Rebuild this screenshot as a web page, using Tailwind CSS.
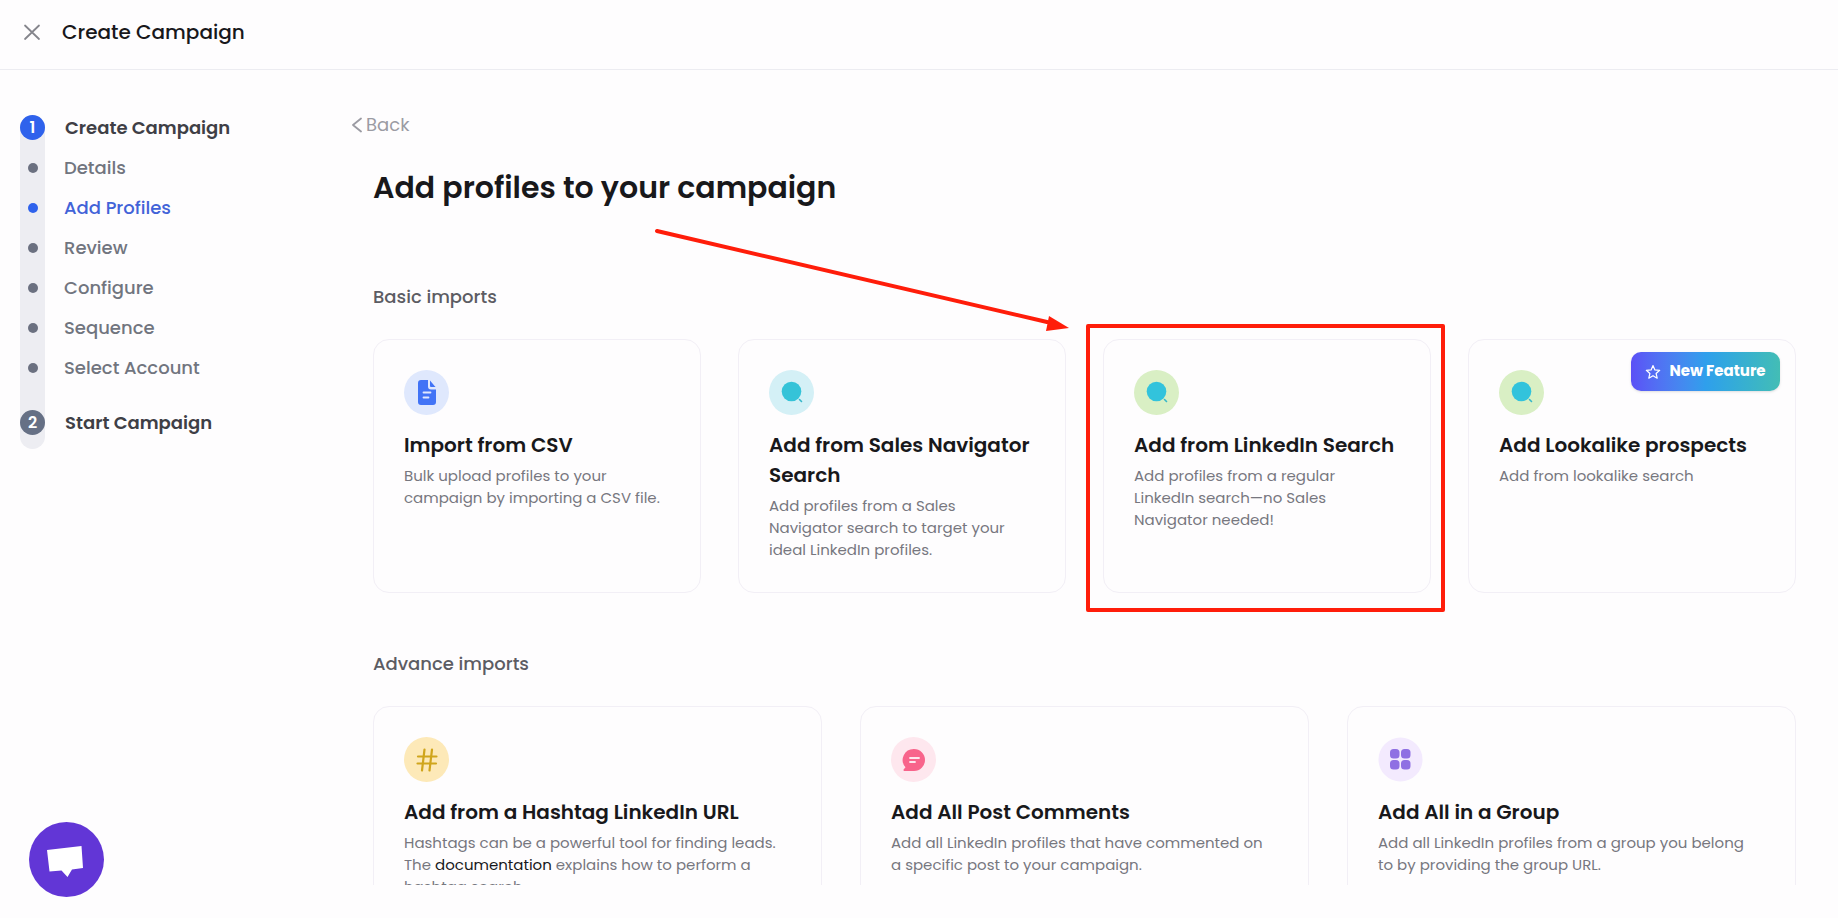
<!DOCTYPE html>
<html lang="en">
<head>
  <meta charset="utf-8">
  <meta name="viewport" content="width=device-width, initial-scale=1">
  <title>Create Campaign</title>
  <script src="https://cdn.jsdelivr.net/npm/@tailwindcss/browser@4"></script>
</head>
<body class="flex h-screen flex-col overflow-hidden bg-[#fefdfe] font-[Poppins,Inter,sans-serif] text-[#18181b]">
  <header class="flex h-[70px] shrink-0 items-center gap-5 border-b border-[#ececf1] px-[22px] pb-[5px]">
    <button aria-label="Close" class="size-5 text-[#85858c]">
      <svg viewBox="0 0 20 20" fill="none" stroke="currentColor" stroke-width="1.800" stroke-linecap="round"><path d="M3 3.500l14 13.500M17 3.500L3 17"/></svg>
    </button>
    <h1 class="text-xl font-medium">Create Campaign</h1>
  </header>

  <div class="flex min-h-0 flex-1 pb-[33px]">
    <nav class="w-[352px] shrink-0 pt-[45px] pl-5">
      <div class="relative flex flex-col pb-[14px]">
        <div class="absolute inset-y-0 left-0 w-[25px] rounded-full bg-[#ededf2]"></div>
        <div class="relative flex h-[25px] items-center gap-5 text-lg font-semibold text-[#3f3f46]">
          <span class="flex size-[25px] items-center justify-center rounded-full bg-[#2f62ec] text-base text-white">1</span>Create Campaign
        </div>
        <ul class="relative mt-2 text-lg font-medium text-[#71757f]">
          <li class="flex h-10 items-center gap-[26px] pl-2"><span class="size-[10px] rounded-full bg-[#6b7080]"></span><a href="#">Details</a></li>
          <li class="flex h-10 items-center gap-[26px] pl-2 text-[#4263d8]"><span class="size-[10px] rounded-full bg-[#2f62ec]"></span><a href="#">Add Profiles</a></li>
          <li class="flex h-10 items-center gap-[26px] pl-2"><span class="size-[10px] rounded-full bg-[#6b7080]"></span><a href="#">Review</a></li>
          <li class="flex h-10 items-center gap-[26px] pl-2"><span class="size-[10px] rounded-full bg-[#6b7080]"></span><a href="#">Configure</a></li>
          <li class="flex h-10 items-center gap-[26px] pl-2"><span class="size-[10px] rounded-full bg-[#6b7080]"></span><a href="#">Sequence</a></li>
          <li class="flex h-10 items-center gap-[26px] pl-2"><span class="size-[10px] rounded-full bg-[#6b7080]"></span><a href="#">Select Account</a></li>
        </ul>
        <div class="relative mt-[22px] flex h-[25px] items-center gap-5 text-lg font-semibold text-[#3f3f46]">
          <span class="flex size-[25px] items-center justify-center rounded-full bg-[#667085] text-base text-white">2</span>Start Campaign
        </div>
      </div>
    </nav>

    <main class="relative min-w-0 flex-1 overflow-hidden pt-[43px] pr-[42px]">
      <button class="flex h-6 items-center gap-1 text-lg text-[#9b9ba3]">
        <svg class="h-4 w-[10px]" viewBox="0 0 10 16" fill="none" stroke="currentColor" stroke-width="1.800" stroke-linecap="round" stroke-linejoin="round"><path d="M9 1.500L1 8l8 6.500"/></svg>Back
      </button>
      <div class="pl-[21px]">
        <h2 class="mt-[31px] text-3xl leading-10 font-semibold">Add profiles to your campaign</h2>

        <h3 class="mt-[77px] text-lg leading-6 font-medium text-[#5c5c63]">Basic imports</h3>
        <div class="mt-[30px] grid grid-cols-4 gap-[37px]">
          <article class="rounded-2xl border border-[#f2eff6] p-[30px] pb-[31px]">
            <svg class="size-[45px]" viewBox="0 0 45 45" fill="none">
              <circle cx="22.500" cy="22.500" r="22.500" fill="#dfe8fd"/>
              <path d="M17 10h7v6.500a3 3 0 0 0 3 3h5V32a3 3 0 0 1-3 3H17a3 3 0 0 1-3-3V13a3 3 0 0 1 3-3z" fill="#4173f6"/>
              <path d="M26 10.500l5.500 6.500H27a1 1 0 0 1-1-1z" fill="#4173f6"/>
              <path d="M19.500 22.500h7M19.500 27.500h5" stroke="#dfe8fd" stroke-width="1.800" stroke-linecap="round"/>
            </svg>
            <h4 class="mt-[15px] text-xl leading-[30px] font-semibold">Import from CSV</h4>
            <p class="mt-[5px] text-[15px] leading-[22px] text-[#77777f]">Bulk upload profiles to your<br>campaign by importing a CSV file.</p>
          </article>
          <article class="rounded-2xl border border-[#f2eff6] p-[30px] pb-[31px]">
            <svg class="size-[45px]" viewBox="0 0 45 45" fill="none">
              <circle cx="22.500" cy="22.500" r="22.500" fill="#d4f0f6"/>
              <circle cx="22.500" cy="21.500" r="9.800" fill="#35c3d8"/>
              <path d="M30.500 29.500l2 2" stroke="#35b6c9" stroke-width="1.600" stroke-linecap="round"/>
            </svg>
            <h4 class="mt-[15px] text-xl leading-[30px] font-semibold">Add from Sales Navigator<br>Search</h4>
            <p class="mt-[5px] text-[15px] leading-[22px] text-[#77777f]">Add profiles from a Sales<br>Navigator search to target your<br>ideal LinkedIn profiles.</p>
          </article>
          <article class="relative rounded-2xl border border-[#f2eff6] p-[30px] pb-[31px]">
            <div class="pointer-events-none absolute -top-4 -right-[15px] -bottom-5 -left-[18px] rounded-xs border-4 border-[#ff1d0a]"></div>
            <svg class="size-[45px]" viewBox="0 0 45 45" fill="none">
              <circle cx="22.500" cy="22.500" r="22.500" fill="#d9efc4"/>
              <circle cx="22.500" cy="21.500" r="9.800" fill="#32c3dc"/>
              <path d="M30.500 29.500l2 2" stroke="#35b6c9" stroke-width="1.600" stroke-linecap="round"/>
            </svg>
            <h4 class="mt-[15px] text-xl leading-[30px] font-semibold">Add from LinkedIn Search</h4>
            <p class="mt-[5px] text-[15px] leading-[22px] text-[#77777f]">Add profiles from a regular<br>LinkedIn search—no Sales<br>Navigator needed!</p>
          </article>
          <article class="relative rounded-2xl border border-[#f2eff6] p-[30px] pb-[31px]">
            <span class="absolute top-3 right-[15px] flex h-[39px] w-[149px] items-center justify-center gap-2 rounded-[10px] bg-linear-to-r from-[#5b50f6] via-[#2f9fec] to-[#43bdb5] text-[15px] font-bold text-white shadow-sm">
              <svg class="size-4" viewBox="0 0 16 16" fill="none" stroke="currentColor" stroke-width="1.200" stroke-linejoin="round"><path d="M8 1.500l1.900 4.400 4.800.4-3.600 3.200 1.100 4.700L8 11.700l-4.200 2.500 1.100-4.700L1.300 6.300l4.800-.4z"/></svg>New Feature
            </span>
            <svg class="size-[45px]" viewBox="0 0 45 45" fill="none">
              <circle cx="22.500" cy="22.500" r="22.500" fill="#d9efc4"/>
              <circle cx="22.500" cy="21.500" r="9.800" fill="#32c3dc"/>
              <path d="M30.500 29.500l2 2" stroke="#35b6c9" stroke-width="1.600" stroke-linecap="round"/>
            </svg>
            <h4 class="mt-[15px] text-xl leading-[30px] font-semibold">Add Lookalike prospects</h4>
            <p class="mt-[5px] text-[15px] leading-[22px] text-[#77777f]">Add from lookalike search</p>
          </article>
        </div>

        <h3 class="mt-[59px] text-lg leading-6 font-medium text-[#5c5c63]">Advance imports</h3>
        <div class="mt-[30px] grid grid-cols-3 gap-[38px]">
          <article class="rounded-2xl border border-[#f2eff6] p-[30px] pb-[31px]">
            <svg class="size-[45px]" viewBox="0 0 45 45" fill="none">
              <circle cx="22.500" cy="22.500" r="22.500" fill="#fde9b8"/>
              <path d="M20.500 12.500l-2.500 21M28 12.500l-2.500 21M14 19.500h18.500M13.500 26.500H32" stroke="#d0a51c" stroke-width="2.200" stroke-linecap="round"/>
            </svg>
            <h4 class="mt-[15px] text-xl leading-[30px] font-semibold">Add from a Hashtag LinkedIn URL</h4>
            <p class="mt-[5px] text-[15px] leading-[22px] text-[#77777f]">Hashtags can be a powerful tool for finding leads.<br>The <a href="#" class="text-[#18181b]">documentation</a> explains how to perform a<br>hashtag search.</p>
          </article>
          <article class="rounded-2xl border border-[#f2eff6] p-[30px] pb-[31px]">
            <svg class="size-[45px]" viewBox="0 0 45 45" fill="none">
              <circle cx="22.500" cy="22.500" r="22.500" fill="#fee7ee"/>
              <path d="M23 12a11 11 0 1 1 0 22H13.500a1 1 0 0 1-.7-1.700l1.700-2A11 11 0 0 1 23 12z" fill="#f8648b"/>
              <path d="M19 21h9M19 25h5" stroke="#fee7ee" stroke-width="1.800" stroke-linecap="round"/>
            </svg>
            <h4 class="mt-[15px] text-xl leading-[30px] font-semibold">Add All Post Comments</h4>
            <p class="mt-[5px] text-[15px] leading-[22px] text-[#77777f]">Add all LinkedIn profiles that have commented on<br>a specific post to your campaign.</p>
          </article>
          <article class="rounded-2xl border border-[#f2eff6] p-[30px] pb-[31px]">
            <svg class="size-[45px]" viewBox="0 0 45 45" fill="#8f70e3">
              <circle cx="22.500" cy="22.500" r="22" fill="#f3eafe"/>
              <rect x="12" y="12" width="9.500" height="9.500" rx="3.500"/><rect x="23" y="12" width="9.500" height="9.500" rx="3.500"/>
              <rect x="12" y="23" width="9.500" height="9.500" rx="3.500"/><rect x="23" y="23" width="9.500" height="9.500" rx="3.500"/>
            </svg>
            <h4 class="mt-[15px] text-xl leading-[30px] font-semibold">Add All in a Group</h4>
            <p class="mt-[5px] text-[15px] leading-[22px] text-[#77777f]">Add all LinkedIn profiles from a group you belong<br>to by providing the group URL.</p>
          </article>
        </div>
      </div>

      <!-- pointer to the highlighted card -->
      <svg class="pointer-events-none absolute top-[156px] left-[300px] h-[110px] w-[420px]" viewBox="0 0 420 110" fill="none">
        <path d="M5 5l390 91" stroke="#ff1d0a" stroke-width="4" stroke-linecap="round"/>
        <path d="M397 90l20 12-23 3z" fill="#ff1d0a"/>
      </svg>
    </main>
  </div>

  <button aria-label="Open chat" class="fixed bottom-[21px] left-[29px] size-[75px] rounded-full bg-[#6236d6]">
    <svg viewBox="0 0 75 75" fill="#fff"><path d="M18 28l34.500-4 1.500 22-11 1.500-4.500 7.500-6-6.500-12 1z"/></svg>
  </button>
</body>
</html>
